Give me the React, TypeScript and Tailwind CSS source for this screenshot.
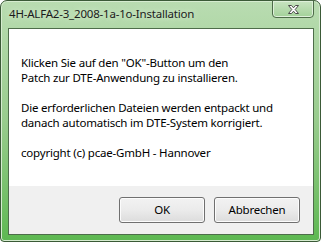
import React from 'react';

const CloseGlyph = () => (
  <svg width="13" height="11" viewBox="0 0 13 11">
    <path
      d="M1.5 1.5 H4.5 L6.5 3.8 L8.5 1.5 H11.5 L8.2 5.5 L11.5 9.5 H8.5 L6.5 7.2 L4.5 9.5 H1.5 L4.8 5.5 Z"
      fill="#ffffff"
      stroke="#4a4a4a"
      strokeWidth="1"
      strokeLinejoin="round"
    />
  </svg>
);

const DialogButton = ({ label }: { label: string }) => (
  <button className="w-[86px] h-[26px] rounded-[3px] border border-[#707070] bg-gradient-to-b from-[#f2f2f2] via-[#ebebeb] to-[#dcdcdc] shadow-[inset_0_0_0_1px_#fcfcfc] text-[11.5px] tracking-[-0.2px] text-black leading-none">
    {label}
  </button>
);

const App = () => {
  return (
    <div
      className="w-[321px] h-[242px] flex flex-col rounded-t-[7px] rounded-b-[4px] border border-[#3b5a37] bg-gradient-to-b from-[#b9dcb1] via-[#98cc8d] to-[#5db851] shadow-[inset_0_0_0_1px_#d6ecd0]"
      style={{ fontFamily: '"Noto Sans", "Open Sans", sans-serif' }}
    >
      {/* title bar */}
      <div className="h-[27px] flex items-start justify-between">
        <span className="pl-[8px] pt-[5px] text-[11.5px] tracking-[-0.2px] leading-[15px] text-[#1b1b1b] [text-shadow:0_0_6px_#e6f3e2]">
          4H-ALFA2-3_2008-1a-1o-Installation
        </span>
        <div className="w-[42px] h-[18px] mr-[6px] -mt-px flex items-center justify-center rounded-b-[4px] border border-[#4d6b49] bg-gradient-to-b from-[#c8e4c1] to-[#a3d199] shadow-[inset_0_0_0_1px_#def0da]">
          <CloseGlyph />
        </div>
      </div>

      {/* client area */}
      <div className="flex-1 ml-[7px] mr-[6px] mb-[6px] flex flex-col border border-[#4e6d4a] bg-white">
        <div className="flex-1 pl-[12px] pt-[26px] text-[11.5px] tracking-[-0.2px] leading-[15px] text-black">
          <p>Klicken Sie auf den "OK"-Button um den</p>
          <p>Patch zur DTE-Anwendung zu installieren.</p>
          <p className="mt-[15px]">Die erforderlichen Dateien werden entpackt und</p>
          <p>danach automatisch im DTE-System korrigiert.</p>
          <p className="mt-[15px]">copyright (c) pcae-GmbH - Hannover</p>
        </div>
        <div className="h-[48px] bg-[#f0f0f0] flex items-center justify-end gap-[9px] pr-[13px]">
          <DialogButton label="OK" />
          <DialogButton label="Abbrechen" />
        </div>
      </div>
    </div>
  );
};

export default App;
